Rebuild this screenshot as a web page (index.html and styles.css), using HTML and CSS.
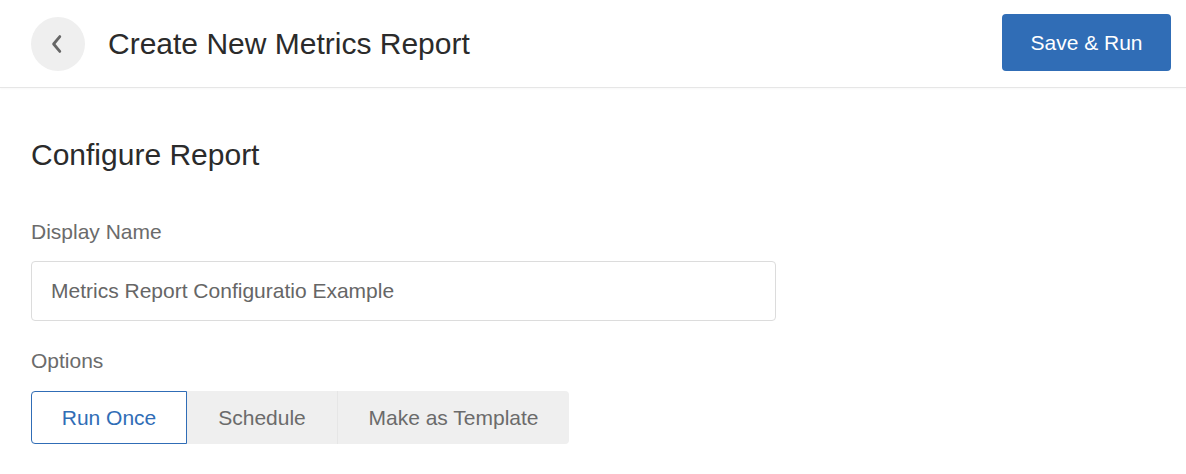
FILE: index.html
```html
<!DOCTYPE html>
<html>
<head>
<meta charset="utf-8">
<link rel="stylesheet" href="styles.css">
</head>
<body>
<header class="topbar">
  <div class="topbar-left">
    <button class="back-btn" aria-label="Back">
      <svg width="14" height="20" viewBox="0 0 14 20"><path d="M9.8 2.6 L3.6 10 L9.8 17.4" fill="none" stroke="#666" stroke-width="2.8" stroke-linecap="round" stroke-linejoin="round"/></svg>
    </button>
    <h1 class="page-title">Create New Metrics Report</h1>
  </div>
  <button class="primary-btn">Save &amp; Run</button>
</header>
<main class="content">
  <h2 class="section-title">Configure Report</h2>
  <label class="field-label">Display Name</label>
  <div class="text-input">Metrics Report Configuratio Example</div>
  <label class="field-label options-label">Options</label>
  <div class="segmented">
    <div class="seg seg-active">Run Once</div>
    <div class="seg">Schedule</div>
    <div class="seg seg-last">Make as Template</div>
  </div>
</main>
</body>
</html>
```

FILE: styles.css
```css
* { box-sizing: border-box; }
html, body { margin: 0; padding: 0; background: #fff; }
body {
  font-family: "Liberation Sans", Arial, sans-serif;
  color: #333;
}
.topbar {
  height: 88px;
  display: flex;
  align-items: center;
  justify-content: space-between;
  padding: 0 15px 0 31px;
  border-bottom: 1px solid #e6e6e6;
  box-shadow: 0 1px 2px rgba(0,0,0,0.03);
}
.topbar-left { display: flex; align-items: center; }
.back-btn {
  width: 54px;
  height: 54px;
  border-radius: 50%;
  border: none;
  background: #efefef;
  display: flex;
  align-items: center;
  justify-content: center;
  padding: 0 2px 0 0;
  margin-right: 23px;
}
.page-title {
  margin: 0;
  font-size: 30px;
  line-height: 34px;
  font-weight: 400;
  color: #2b2b2b;
}
.primary-btn {
  width: 169px;
  height: 57px;
  background: #306db6;
  color: #fff;
  border: none;
  border-radius: 4px;
  font-family: inherit;
  font-size: 21px;
  margin-bottom: 2px;
}
.content {
  padding: 50px 31px 0 31px;
}
.section-title {
  margin: 0;
  font-size: 30px;
  font-weight: 400;
  color: #2b2b2b;
  line-height: 34px;
}
.field-label {
  display: block;
  font-size: 21px;
  color: #6b6b6b;
  margin-top: 48px;
  line-height: 24px;
}
.text-input {
  margin-top: 17px;
  width: 745px;
  height: 60px;
  border: 1px solid #dcdcdc;
  border-radius: 4px;
  padding: 0 19px;
  display: flex;
  align-items: center;
  font-size: 21px;
  color: #666;
}
.options-label { margin-top: 28px; }
.segmented {
  margin-top: 18px;
  display: inline-flex;
  height: 53px;
  background: #efefef;
  border-radius: 4px;
}
.seg {
  display: flex;
  align-items: center;
  justify-content: center;
  font-size: 21px;
  color: #6b6b6b;
  height: 100%;
}
.seg-active {
  width: 156px;
  background: #fff;
  border: 1px solid #306db6;
  border-radius: 4px 0 0 4px;
  color: #306db6;
}
.seg:nth-child(2) { width: 151px; border-right: 1px solid #e6e6e6; }
.seg-last { width: 231px; border-radius: 0 4px 4px 0; }
```
